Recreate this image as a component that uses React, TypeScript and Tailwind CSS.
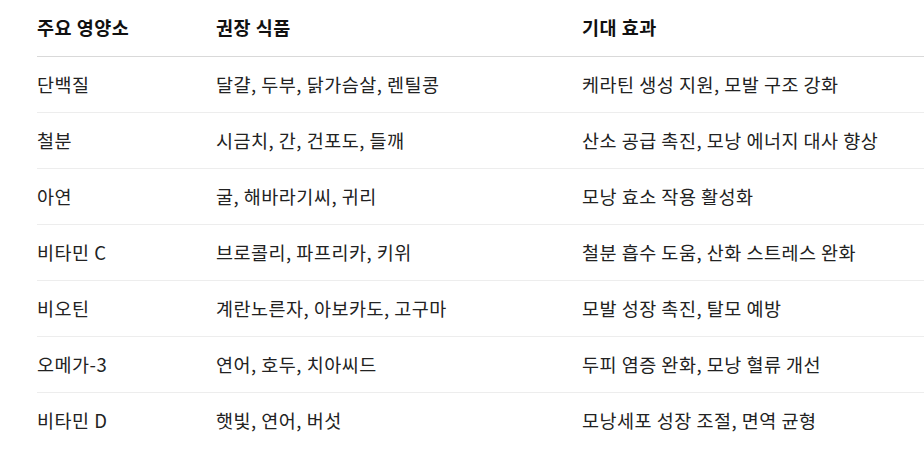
const rows = [
  { nutrient: "단백질", foods: "달걀, 두부, 닭가슴살, 렌틸콩", effect: "케라틴 생성 지원, 모발 구조 강화" },
  { nutrient: "철분", foods: "시금치, 간, 건포도, 들깨", effect: "산소 공급 촉진, 모낭 에너지 대사 향상" },
  { nutrient: "아연", foods: "굴, 해바라기씨, 귀리", effect: "모낭 효소 작용 활성화" },
  { nutrient: "비타민 C", foods: "브로콜리, 파프리카, 키위", effect: "철분 흡수 도움, 산화 스트레스 완화" },
  { nutrient: "비오틴", foods: "계란노른자, 아보카도, 고구마", effect: "모발 성장 촉진, 탈모 예방" },
  { nutrient: "오메가-3", foods: "연어, 호두, 치아씨드", effect: "두피 염증 완화, 모낭 혈류 개선" },
  { nutrient: "비타민 D", foods: "햇빛, 연어, 버섯", effect: "모낭세포 성장 조절, 면역 균형" },
];

export default function App() {
  return (
    <div className="min-h-[458px] bg-white pl-[37px] font-['Noto_Sans_CJK_KR','Noto_Sans',sans-serif] text-[18.5px] tracking-[0.5px] text-[#222]">
      {/* HEADER */}
      <div className="grid h-[57px] grid-cols-[179px_366px_1fr] items-center border-b border-[#d9d9d9] font-bold text-[#111]">
        <div>주요 영양소</div>
        <div>권장 식품</div>
        <div>기대 효과</div>
      </div>

      {/* BODY */}
      {rows.map((row, i) => (
        <div
          key={row.nutrient}
          className={`grid h-[56px] grid-cols-[179px_366px_1fr] items-center ${
            i < rows.length - 1 ? "border-b border-[#ededed]" : ""
          }`}
        >
          <div>{row.nutrient}</div>
          <div>{row.foods}</div>
          <div>{row.effect}</div>
        </div>
      ))}
    </div>
  );
}
